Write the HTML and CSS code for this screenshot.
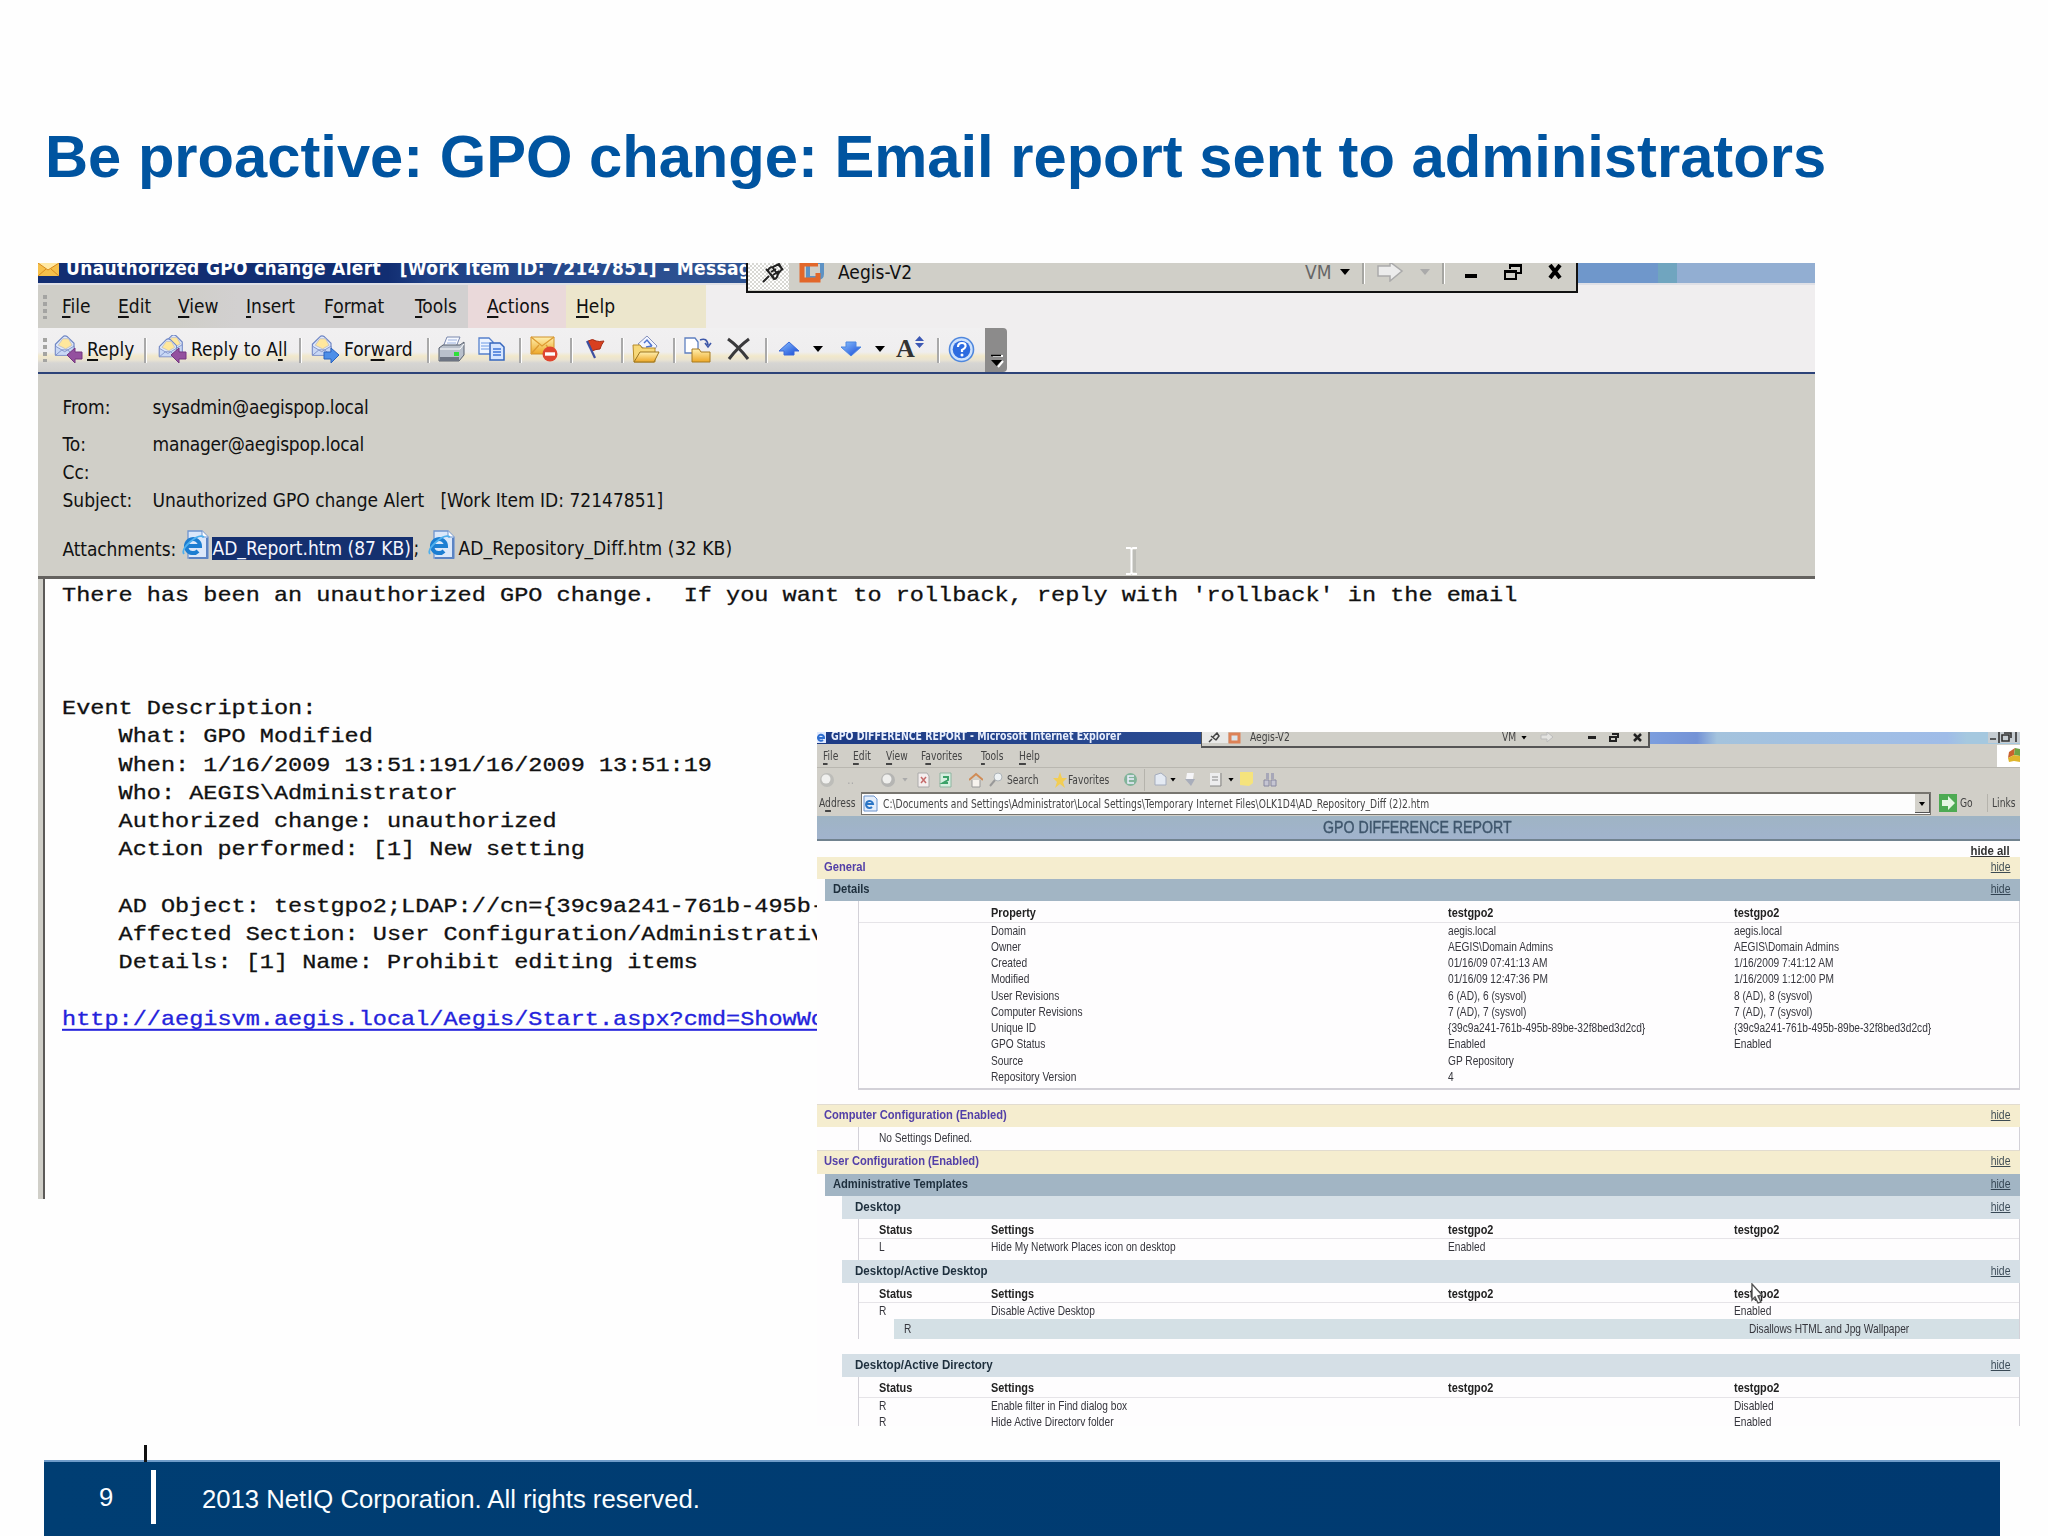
FILE: index.html
```html
<!DOCTYPE html>
<html lang="en">
<head>
<meta charset="utf-8">
<title>Be proactive: GPO change</title>
<link rel="stylesheet" href="styles.css">
</head>
<body>
<svg width="0" height="0" class="defs" aria-hidden="true">
  <defs>
    <linearGradient id="gold" x1="0" y1="0" x2="0" y2="1"><stop offset="0" stop-color="#fff0b0"/><stop offset="1" stop-color="#eda726"/></linearGradient>
    <linearGradient id="blue" x1="0" y1="0" x2="1" y2="1"><stop offset="0" stop-color="#8cc4ff"/><stop offset="1" stop-color="#1547d6"/></linearGradient>
    <symbol id="mail-open" viewBox="0 0 28 28">
      <path d="M1 10 9 2q2-2 5 0l7 7v12H1z" fill="#dfe9fb" stroke="#6f86c4" stroke-width="1.3"/>
      <path d="M4 11 9 4h6l4 7-7 4z" fill="#ffe79c" stroke="#b7b9c9" stroke-width=".8"/>
      <path d="M1 12l10 6 10-6v10H1z" fill="#c9d8f5" stroke="#7d90c8" stroke-width="1"/>
      <path d="M1 22l7-6h6l7 6" fill="none" stroke="#7d90c8"/>
    </symbol>
    <symbol id="ie-page" viewBox="0 0 28 30">
      <path d="M6 1h14l6 6v21H6z" fill="#dbe8fa" stroke="#6f95cf" stroke-width="1.3"/>
      <path d="M20 1v6h6" fill="#fff" stroke="#6f95cf"/>
      <path d="M25 8v20H7" fill="none" stroke="#5b84c4" stroke-width="2"/>
      <path d="M4 16h14a7 7 0 1 0-2 5" fill="none" stroke="#1c7ed2" stroke-width="4"/>
      <path d="M2 24Q-1 20 8 12T22 7" fill="none" stroke="#4fb0ee" stroke-width="1.8"/>
    </symbol>
  </defs>
</svg>
<main class="slide">
  <h1 class="headline">Be proactive: GPO change: Email report sent to administrators</h1>

  <section class="stage">
    <article class="mail">
      <header class="titlebar">
        <div class="caption">
          <svg class="envelope" width="21" height="14" viewBox="0 0 21 14"><path d="M0 0h21v13H0z" fill="#f6c04a"/><path d="M0 0l10 7L21 0" fill="#ffe9a5" stroke="#d78a1c"/><path d="M0 13l8-7M21 13l-8-7" stroke="#d78a1c"/></svg>
          <span>Unauthorized GPO change Alert &nbsp; [Work Item ID: 72147851] - Messag</span>
        </div>
      </header>

      <nav class="menubar">
        <i class="grip"></i>
        <span><u>F</u>ile</span><span><u>E</u>dit</span><span><u>V</u>iew</span><span><u>I</u>nsert</span><span>F<u>o</u>rmat</span><span><u>T</u>ools</span><span class="pink"><u>A</u>ctions</span><span class="cream"><u>H</u>elp</span>
      </nav>

      <div class="toolbar">
        <i class="grip"></i>
        <svg width="29" height="28" viewBox="0 0 29 28"><use href="#mail-open" width="27" height="26"/><path d="M13 20l8-7v4h7v7h-7v4z" fill="#94509f" stroke="#74357f"/></svg>
        <span><u>R</u>eply</span><i class="sep"></i>
        <svg width="29" height="28" viewBox="0 0 29 28"><use href="#mail-open" x="5" y="-1" width="26" height="25"/><use href="#mail-open" x="0" y="3" width="25" height="24"/><path d="M13 20l8-7v4h7v7h-7v4z" fill="#94509f" stroke="#74357f"/></svg>
        <span>Reply to A<u>l</u>l</span><i class="sep"></i>
        <svg width="29" height="28" viewBox="0 0 29 28"><use href="#mail-open" width="27" height="26"/><path d="M28 20l-8-7v4h-7v7h7v4z" fill="#4d8fe8" stroke="#2a62bd"/></svg>
        <span>For<u>w</u>ard</span><i class="sep"></i>
        <svg width="28" height="26" viewBox="0 0 28 26"><path d="M9 1h13l-4 10H5z" fill="#f5f8ff" stroke="#7b88ac"/><path d="M10 4h9M9 7h9" stroke="#9db2de"/><path d="M1 12l4-3h17l4-3v13l-5 6H1z" fill="#b9c0cb" stroke="#59606e"/><path d="M2 13h20l4-5" stroke="#fff" fill="none"/><path d="M2 21h19v4H2z" fill="#6d7482"/><path d="M16 16h5v4h-5z" fill="#2fe03a"/></svg>
        <svg width="28" height="24" viewBox="0 0 28 24"><path d="M1 1h10l4 4v12H1z" fill="#eef5ff" stroke="#5580cc" stroke-width="1.3"/><path d="M3 6h8M3 9h8M3 12h8" stroke="#6d9be6"/><path d="M12 6h10l4 4v13H12z" fill="#d7e6ff" stroke="#3565bd" stroke-width="1.5"/><path d="M15 12h8M15 15h8M15 18h8" stroke="#3f76d8" stroke-width="1.3"/></svg>
        <i class="sep"></i>
        <svg width="28" height="26" viewBox="0 0 28 26"><path d="M1 1h23v17H1z" fill="url(#gold)" stroke="#d09028"/><path d="M1 1l11 9L24 1M1 18l8-9M24 18l-8-9" fill="none" stroke="#dd9a32" stroke-width="1.3"/><circle cx="20" cy="18" r="7.5" fill="#df4630"/><path d="M15 18h10" stroke="#fff" stroke-width="3.4"/></svg>
        <i class="sep"></i>
        <svg width="20" height="20" viewBox="0 0 20 20"><path d="M2 2q5-3 8 0 3 1 8 0-3 4-4 8-4 0-8 2z" fill="#d8401f" stroke="#a52c16"/><path d="M1 2l8 17" stroke="#3d4fa0" stroke-width="2.2"/></svg>
        <i class="sep"></i>
        <svg width="28" height="28" viewBox="0 0 28 28"><path d="M6 9l9-8 10 10-6 8z" fill="#f2f5ff" stroke="#8590bb"/><path d="M12 8l3-3 5 6M14 12l6-1" stroke="#4e74cf" fill="none" stroke-width="1.5"/><path d="M1 10h7l2 3h13v14H2z" fill="#f7d878" stroke="#b78b28"/><path d="M2 27l6-10h19l-5 10z" fill="url(#gold)" stroke="#9b7420"/></svg>
        <i class="sep"></i>
        <svg width="28" height="27" viewBox="0 0 28 27"><path d="M1 2h10l3 4v11H1z" fill="#fff" stroke="#5f80c0" stroke-width="1.3"/><path d="M16 4q7-3 8 5m-3-2 3 4 3-4" fill="none" stroke="#3d57a8" stroke-width="1.6"/><path d="M8 13h7l2 3h9v10H8z" fill="url(#gold)" stroke="#a67a22"/></svg>
        <svg width="24" height="24" viewBox="0 0 24 24"><path d="M1 2q10 7 20 20M22 2Q11 10 2 22" fill="none" stroke="#3a3a3c" stroke-width="3"/></svg>
        <i class="sep"></i>
        <svg width="22" height="16" viewBox="0 0 22 16"><path d="M11 1l10 9h-5v4H6v-4H1z" fill="url(#blue)" stroke="#3c6ad8"/></svg>
        <i class="caret"></i>
        <svg width="22" height="16" viewBox="0 0 22 16"><path d="M11 15L1 6h5V1h10v5h5z" fill="url(#blue)" stroke="#4d86e0"/></svg>
        <i class="caret"></i>
        <span class="fontsize"><b>A</b><svg width="9" height="12" viewBox="0 0 9 12"><path d="M4.500 0L9 5H0zM4.500 12L0 7h9z" fill="#3c58b4"/></svg></span>
        <i class="sep"></i>
        <svg width="27" height="27" viewBox="0 0 27 27"><circle cx="13.500" cy="13.500" r="12" fill="#cfe2fc" stroke="#4f87dd" stroke-width="1.6"/><circle cx="13.500" cy="13.500" r="8.800" fill="#2d6be0"/><path d="M10 11q0-4 4-4t3.500 3.500Q17 12.500 14 14v2" fill="none" stroke="#fff" stroke-width="2.2"/><circle cx="14" cy="19" r="1.500" fill="#fff"/></svg>
        <i class="overflow"><svg width="14" height="14" viewBox="0 0 14 14"><path d="M3 2h10M8 13l5-6" stroke="#fff" stroke-width="2"/><path d="M1 1.500h10" stroke="#000" stroke-width="1.500"/><path d="M1 6h11l-5.500 6z" fill="#000"/></svg></i>
      </div>

      <dl class="fields">
        <dt>From:</dt><dd class="tight">sysadmin@aegispop.local</dd>
        <dt>To:</dt><dd class="tight">manager@aegispop.local</dd>
        <dt>Cc:</dt><dd></dd>
        <dt>Subject:</dt><dd>Unauthorized GPO change Alert &nbsp; [Work Item ID: 72147851]</dd>
      </dl>
      <div class="attachments">
        <span>Attachments:</span>
        <svg width="28" height="30"><use href="#ie-page"/></svg>
        <span class="selected">AD_Report.htm (87 KB)</span><span>;</span>
        <svg width="28" height="30"><use href="#ie-page"/></svg>
        <span class="second">AD_Repository_Diff.htm (32 KB)</span>
      </div>

      <div class="body"><pre>There has been an unauthorized GPO change.  If you want to rollback, reply with 'rollback' in the email



Event Description:
    What: GPO Modified
    When: 1/16/2009 13:51:191/16/2009 13:51:19
    Who: AEGIS\Administrator
    Authorized change: unauthorized
    Action performed: [1] New setting

    AD Object: testgpo2;LDAP://cn={39c9a241-761b-495b-
    Affected Section: User Configuration/Administrativ
    Details: [1] Name: Prohibit editing items

<a>http://aegisvm.aegis.local/Aegis/Start.aspx?cmd=ShowWo</a></pre></div>

      <div class="vmbar">
        <span class="pin"><svg width="22" height="20" viewBox="0 0 22 20"><path d="M1 19l6-6M4 6l8 9M6 8q1-4 5-4l6-3 3 5-4 5q-1 5-4 5zM11 5l5 7M16 1l5 6M9 9l5-3M11 12l6-4" fill="none" stroke="#222" stroke-width="2"/></svg></span>
        <svg width="25" height="21" viewBox="0 0 25 21"><path d="M9 0h14v12q0 4-5 4H9z" fill="none" stroke="#5d92c4" stroke-width="4"/><path d="M19 2H3v16h16v-7" fill="none" stroke="#e2672a" stroke-width="5"/></svg>
        <span>Aegis-V2</span>
        <span class="vm">VM</span><i class="caret"></i><i class="sep"></i>
        <svg width="27" height="20" viewBox="0 0 27 20"><path d="M1 4h12V0l12 9-12 10v-5H1z" fill="#ececec" stroke="#aaa" stroke-width="1.500"/></svg>
        <i class="caret dim"></i><i class="sep"></i>
        <svg width="12" height="5"><path d="M0 0h12v4H0z"/></svg>
        <svg width="18" height="17" viewBox="0 0 18 17"><path d="M6 5V1h11v8h-4" fill="none" stroke="#000" stroke-width="2"/><path d="M5 1.500h12" stroke="#000" stroke-width="3"/><path d="M1 7h11v8H1z" fill="none" stroke="#000" stroke-width="2"/><path d="M1 7.500h11" stroke="#000" stroke-width="3"/></svg>
        <svg width="17" height="16" viewBox="0 0 17 16"><path d="M4 1l10 13M14 1L4 14" stroke="#000" stroke-width="4"/></svg>
      </div>
      <svg class="ibeam" width="14" height="30" viewBox="0 0 14 30"><path d="M9 4v22" stroke="#bdbdb7" stroke-width="4"/><path d="M1 2h4l1.500 1L8 2h4M1 28h4l1.500-1L8 28h4M6.500 3v24" fill="none" stroke="#fff" stroke-width="2"/></svg>
    </article>

    <article class="report">
      <header class="r-title"><svg width="12" height="12" viewBox="0 0 12 12"><path d="M0 0h9v11H0z" fill="#dfe9ff"/><path d="M2 6h5a3 3 0 1 0-1 2" fill="none" stroke="#2f6fd0" stroke-width="2"/></svg><b class="sq">GPO DIFFERENCE REPORT - Microsoft Internet Explorer</b>
        <span class="r-win"><svg width="32" height="11" viewBox="0 0 32 11"><path d="M0 0h32v11H0z" fill="#c6cdd2"/><path d="M2 7h6M14 3h7v6h-7zM16 1h7v5M28 0v10M11 0v11" fill="none" stroke="#333" stroke-width="1.600"/></svg></span>
      </header>
      <nav class="r-menu"><span class="sq"><u>F</u>ile</span><span class="sq"><u>E</u>dit</span><span class="sq"><u>V</u>iew</span><span class="sq">F<u>a</u>vorites</span><span class="sq"><u>T</u>ools</span><span class="sq"><u>H</u>elp</span>
        <i class="flag"><svg width="23" height="20" viewBox="0 0 23 20"><path d="M12 7l6-4-1 7-6 3z" fill="#c9622f"/><path d="M18 3l5 1v7l-6-1z" fill="#6fa345"/><path d="M11 13l6-3 6 1v6l-6-1-5 1z" fill="#dfb62c"/></svg></i>
      </nav>
      <div class="r-tools">
        <svg width="17" height="16" viewBox="0 0 17 16"><circle cx="8" cy="8" r="7" fill="#bdbdb9"/><circle cx="7" cy="7" r="4.500" fill="#f0f0ee"/></svg>
        <span class="dots">‥</span>
        <svg width="17" height="16" viewBox="0 0 17 16"><circle cx="8" cy="8" r="7" fill="#b5b5b3"/><circle cx="7" cy="7" r="4.500" fill="#efefed"/></svg>
        <i class="caret dim"></i>
        <svg width="13" height="16" viewBox="0 0 13 16"><path d="M1 1h9l2 3v11H1z" fill="#f4eeee" stroke="#aaa"/><path d="M4 5l5 6M9 5l-5 6" stroke="#c56a6a" stroke-width="1.500"/></svg>
        <svg width="13" height="16" viewBox="0 0 13 16"><path d="M1 1h11v14H1z" fill="#d6efe0" stroke="#8fb5a0"/><path d="M4 5h5v3L4 11h5" fill="none" stroke="#3ba268" stroke-width="2"/></svg>
        <svg width="14" height="16" viewBox="0 0 14 16"><path d="M0 8l7-6 7 6" fill="none" stroke="#d08b55" stroke-width="2"/><path d="M3 8v7h8V8" fill="#f7f3ee" stroke="#999"/></svg>
        <svg width="14" height="16" viewBox="0 0 14 16"><circle cx="9" cy="5" r="4" fill="#eef2f4" stroke="#aeb4b8"/><path d="M6 8l-5 6" stroke="#999" stroke-width="2"/></svg>
        <span class="sq">Search</span>
        <svg width="14" height="16" viewBox="0 0 14 16"><path d="M7 0l2 6h5l-4 4 2 6-5-4-5 4 2-6-4-4h5z" fill="#f2cd54"/></svg>
        <span class="sq">Favorites</span>
        <svg width="15" height="15" viewBox="0 0 15 15"><circle cx="7.500" cy="7.500" r="6.500" fill="#82b49a"/><path d="M11 4H5v3h6M5 7v4h6" fill="none" stroke="#eef" stroke-width="1.500"/></svg>
        <i class="sep"></i>
        <svg width="13" height="15" viewBox="0 0 13 15"><path d="M1 3l6-2 5 4v8H1z" fill="#e4eaf3" stroke="#a5adbd"/></svg>
        <i class="caret"></i>
        <svg width="12" height="15" viewBox="0 0 12 15"><path d="M3 1h7l-1 6H2z" fill="#f5f5f8"/><path d="M1 7h10l-4 7z" fill="#a9aebb"/></svg>
        <svg width="13" height="15" viewBox="0 0 13 15"><path d="M1 1h10v13H1z" fill="#ededee"/><path d="M3 5h6M3 8h6M12 1v13H1" fill="none" stroke="#888"/></svg>
        <i class="caret"></i>
        <svg width="17" height="17" viewBox="0 0 17 17"><path d="M2 1h13v11l-4 3-9-1z" fill="#f5e37c"/></svg>
        <svg width="14" height="16" viewBox="0 0 14 16"><path d="M3 1h3v6H3zM8 1h3v6H8z" fill="#a7a7b8"/><path d="M1 8h5v6H1zM8 8h5v6H8z" fill="#c5c5d2" stroke="#8888a0"/></svg>
      </div>
      <div class="r-addr">
        <span class="sq">A<u>d</u>dress</span>
        <div class="field"><svg width="15" height="17" viewBox="0 0 15 17"><path d="M1 1h10l3 3v12H1z" fill="#e4eefb" stroke="#6b93cc"/><path d="M4 9h6a3.500 3.500 0 1 0-1 3" fill="none" stroke="#2b76c6" stroke-width="2"/></svg><span class="sq url">C:\Documents and Settings\Administrator\Local Settings\Temporary Internet Files\OLK1D4\AD_Repository_Diff (2)2.htm</span><i class="drop"><i class="caret"></i></i></div>
        <svg class="go" width="18" height="18" viewBox="0 0 18 18"><path d="M0 0h18v18H0z" fill="#4daa53"/><path d="M3 6h6V2l7 7-7 7v-4H3z" fill="#e5f6e3"/></svg>
        <span class="sq">Go</span><i class="sep"></i><span class="sq">Links</span>
      </div>
      <h2 class="r-band"><span class="sq">GPO DIFFERENCE REPORT</span></h2>
      <div class="r-all"><b class="sq">hide all</b></div>

      <div class="sec gold"><b class="sq">General</b><a class="sq">hide</a></div>
      <div class="sec steel"><b class="sq">Details</b><a class="sq">hide</a></div>
      <div class="panel props">
        <div class="row head"><i></i><b class="sq">Property</b><b class="sq">testgpo2</b><b class="sq">testgpo2</b></div>
        <div class="row"><i></i><span class="sq">Domain</span><span class="sq">aegis.local</span><span class="sq">aegis.local</span></div>
        <div class="row"><i></i><span class="sq">Owner</span><span class="sq">AEGIS\Domain Admins</span><span class="sq">AEGIS\Domain Admins</span></div>
        <div class="row"><i></i><span class="sq">Created</span><span class="sq">01/16/09 07:41:13 AM</span><span class="sq">1/16/2009 7:41:12 AM</span></div>
        <div class="row"><i></i><span class="sq">Modified</span><span class="sq">01/16/09 12:47:36 PM</span><span class="sq">1/16/2009 1:12:00 PM</span></div>
        <div class="row"><i></i><span class="sq">User Revisions</span><span class="sq">6 (AD), 6 (sysvol)</span><span class="sq">8 (AD), 8 (sysvol)</span></div>
        <div class="row"><i></i><span class="sq">Computer Revisions</span><span class="sq">7 (AD), 7 (sysvol)</span><span class="sq">7 (AD), 7 (sysvol)</span></div>
        <div class="row"><i></i><span class="sq">Unique ID</span><span class="sq">{39c9a241-761b-495b-89be-32f8bed3d2cd}</span><span class="sq">{39c9a241-761b-495b-89be-32f8bed3d2cd}</span></div>
        <div class="row"><i></i><span class="sq">GPO Status</span><span class="sq">Enabled</span><span class="sq">Enabled</span></div>
        <div class="row"><i></i><span class="sq">Source</span><span class="sq">GP Repository</span></div>
        <div class="row"><i></i><span class="sq">Repository Version</span><span class="sq">4</span></div>
      </div>

      <div class="sec gold"><b class="sq">Computer Configuration (Enabled)</b><a class="sq">hide</a></div>
      <div class="panel none"><span class="sq">No Settings Defined.</span></div>
      <div class="sec gold"><b class="sq">User Configuration (Enabled)</b><a class="sq">hide</a></div>
      <div class="sec steel"><b class="sq">Administrative Templates</b><a class="sq">hide</a></div>

      <div class="sec pale"><b class="sq">Desktop</b><a class="sq">hide</a></div>
      <div class="panel">
        <div class="row head"><b class="sq">Status</b><b class="sq">Settings</b><b class="sq">testgpo2</b><b class="sq">testgpo2</b></div>
        <div class="row last"><span class="sq">L</span><span class="sq">Hide My Network Places icon on desktop</span><span class="sq">Enabled</span></div>
      </div>
      <div class="sec pale"><b class="sq">Desktop/Active Desktop</b><a class="sq">hide</a></div>
      <div class="panel">
        <div class="row head"><b class="sq">Status</b><b class="sq">Settings</b><b class="sq">testgpo2</b><b class="sq">testgpo2</b></div>
        <div class="row"><span class="sq">R</span><span class="sq">Disable Active Desktop</span><i></i><span class="sq">Enabled</span></div>
        <div class="subrow"><span class="sq">R</span><span class="sq">Disallows HTML and Jpg Wallpaper</span></div>
      </div>
      <div class="sec pale"><b class="sq">Desktop/Active Directory</b><a class="sq">hide</a></div>
      <div class="panel">
        <div class="row head"><b class="sq">Status</b><b class="sq">Settings</b><b class="sq">testgpo2</b><b class="sq">testgpo2</b></div>
        <div class="row"><span class="sq">R</span><span class="sq">Enable filter in Find dialog box</span><i></i><span class="sq">Disabled</span></div>
        <div class="row"><span class="sq">R</span><span class="sq">Hide Active Directory folder</span><i></i><span class="sq">Enabled</span></div>
      </div>

      <div class="r-vm">
        <i class="pin"><svg width="12" height="11" viewBox="0 0 12 11"><path d="M1 10l3-3M3 4l5 4M5 5l4-4 2 3-3 4" fill="none" stroke="#444" stroke-width="1.500"/></svg></i>
        <svg width="13" height="12" viewBox="0 0 13 12"><path d="M2 2h9v8H2z" fill="#dbe4ea" stroke="#dd8257" stroke-width="3"/></svg>
        <span class="sq">Aegis-V2</span><span class="sq">VM</span><i class="caret"></i>
        <svg width="14" height="11" viewBox="0 0 14 11"><path d="M1 3h6V0l6 5-6 5V7H1z" fill="#e3e3e0" stroke="#bbb"/></svg>
        <svg width="8" height="3"><path d="M0 0h8v3H0z" fill="#222"/></svg>
        <svg width="10" height="9" viewBox="0 0 10 9"><path d="M3 1h6v4M1 4h6v4H1z" fill="none" stroke="#222" stroke-width="2"/></svg>
        <svg width="9" height="9" viewBox="0 0 9 9"><path d="M1 1l7 7M8 1L1 8" stroke="#222" stroke-width="2.500"/></svg>
      </div>
      <svg class="pointer" width="14" height="22" viewBox="0 0 14 22"><path d="M1 1l10 11-4 1 3 6-3 1-3-6-3 3z" fill="#fff" stroke="#555" stroke-width="1.400"/></svg>
    </article>
  </section>

  <footer class="foot">
    <span class="page">9</span><i class="rule"></i><span class="copy">2013 NetIQ Corporation. All rights reserved.</span>
    <i class="tick"></i>
  </footer>
</main>
</body>
</html>
```
FILE: styles.css
```css
* { box-sizing: border-box; }
body { margin: 0; background: #fefefe; font-family: "Liberation Sans", sans-serif; }
.defs { position: absolute; }
svg { display: block; flex: none; }
i { display: block; font-style: normal; }
u { text-underline-offset: 3px; text-decoration-thickness: 1.5px; text-decoration-skip-ink: none; }

.slide { width: 2048px; height: 1536px; overflow: hidden; display: flex; flex-direction: column; }
.headline {
  margin: 0; height: 263px; padding: 125px 0 0 45px;
  font-size: 59.7px; line-height: 64px; color: #0054a0; white-space: nowrap;
}
.stage { position: relative; height: 1197px; }

/* mail window */
.mail {
  position: relative; margin-left: 38px; width: 1777px; height: 936px;
  display: flex; flex-direction: column;
  font: 19px "DejaVu Sans Condensed", "DejaVu Sans", sans-serif; color: #111; white-space: nowrap;
}
.titlebar {
  height: 22px; border-bottom: 2px solid #dfe0e6;
  background: linear-gradient(90deg, #122e72 0, #122e72 350px, #1f4186 390px, #2f5493 700px, #2f5493 1540px, #6f97cb 1540px, #6f97cb 1620px, #70a5bf 1620px, #70a5bf 1639px, #92aed2 1639px);
}
.caption { display: flex; gap: 7px; height: 20px; width: 709px; overflow: hidden; color: #fff; font-weight: bold; letter-spacing: .31px; }
.caption span { line-height: 24px; margin-top: -7px; }
.menubar {
  height: 43px; display: grid; align-items: center;
  grid-template-columns: 24px 56px 60px 68px 78px 91px 53px 98px 140px;
  background: linear-gradient(90deg, #cfcec8 0, #cfcec8 140px, #d2d0d0 200px, #d2d0d0 430px, #f0eeef 668px);
}
.menubar span { line-height: 43px; }
.pink { background: #ead9da; padding-left: 19px; }
.cream { background: #ece6cc; padding-left: 10px; }
.grip { width: 4px; height: 24px; margin-left: 5px; background: repeating-linear-gradient(#a4a4a2 0 4px, transparent 4px 7px); }
.toolbar {
  height: 46px; display: grid; align-items: center; border-bottom: 2px solid #2c4378;
  grid-template-columns: 16px 33px 57px 14px 33px 108px 12px 33px 83px 11px 40px 41px 11px 40px 16px 35px 11px 41px 11px 43px 38px 13px 35px 27px 35px 21px 41px 11px 37px 22px;
  background: linear-gradient(#f1f0f1 0, #efeeef 24px, #f1e8cb 28px, #e9e3d2 32px, #d6d5d3 35px, #d0cfcc 43px) 0 0 / 960px 100% no-repeat #f0eeef;
}
.toolbar > * { justify-self: start; }
.toolbar > svg, .toolbar > .caret { margin-top: -2px; }
.toolbar .sep { width: 3px; height: 25px; background: #a9a9a9; border-right: 1px solid #fff; }
.toolbar span { margin-top: -3px; }
.caret { width: 10px; height: 6px; background: #000; clip-path: polygon(0 0, 100% 0, 50% 100%); }
.caret.dim { background: #aaa; }
.fontsize { display: flex; align-items: flex-start; color: #333; }
.fontsize b { font: bold 26px/26px "Liberation Serif", serif; }
.overflow { width: 22px; height: 44px; padding: 26px 0 0 5px; background: #8c8b8b; border-radius: 0 4px 4px 0; }
.fields {
  margin: 0; height: 141px; padding: 19px 0 0 24.500px; background: #d0cfc8;
  display: grid; grid-template-columns: 90px 1fr; grid-template-rows: 37px 28px 28px 28px; line-height: 28px;
}
.fields dt, .fields dd { margin: 0; }
.fields .tight { letter-spacing: -.24px; }
.attachments {
  height: 64px; padding: 16px 0 0 24.500px; background: #d0cfc8; border-bottom: 3px solid #64625f;
  display: flex; align-items: flex-start; line-height: 34px;
}
.attachments > span:first-child { width: 118px; letter-spacing: -.1px; margin-top: 1px; }
.attachments svg { width: 30px; margin: -1px 1px 0 0; }
.attachments .selected { height: 23px; line-height: 22px; margin-top: 6px; width: 201px; padding-left: 1px; background: #14306f; color: #f4f6ff; }
.selected + span { width: 14px; padding-left: 1px; }
.second { letter-spacing: .13px; padding-left: 1px; }
.body { flex: 1; border-left: 5px solid #d0cfc8; margin-right: -40px; background: linear-gradient(90deg, #5c5a58 2px, #fefefe 2px); }
.body pre {
  margin: 0; padding: 0; width: max-content;
  font: 21px/28.270px "Liberation Mono", monospace; -webkit-text-stroke: .3px;
  transform: translate(19px, 2.800px) scaleX(1.1212); transform-origin: 0 0;
}
.body a { color: #2422dc; text-decoration: underline; text-underline-offset: 4px; text-decoration-thickness: 1.500px; text-decoration-skip-ink: none; }
.vmbar {
  position: absolute; left: 708px; top: 0; width: 832px; height: 30px; overflow: hidden;
  border: 2px solid #111; border-top: 0; background: #d0cfc8;
  display: grid; align-items: center; grid-template-rows: 18px;
  grid-template-columns: 51px 39px 467px 35px 22px 15px 43px 22px 23px 39px 42px 20px;
}
.vmbar .pin { height: 27px; width: 41px; align-self: start; padding: 0 0 0 14px; background: repeating-conic-gradient(#fff 0 25%, #d8d8d4 0 50%) 0 0 / 4px 4px; }
.vmbar .sep { width: 3px; height: 24px; background: #a5a5a1; border-right: 1px solid #fff; }
.vm { color: #666; }
.vmbar svg:nth-of-type(3) { margin-top: 9px; }
.ibeam { position: absolute; left: 1087px; top: 283px; }

/* browser report, laid over the mail */
.report {
  position: absolute; left: 817px; top: 469px; width: 1203px; height: 694px; overflow: hidden;
  background: #fefdfe; color: #36363d; font-size: 12.400px; line-height: 16px; white-space: nowrap; filter: blur(.5px);
}
.sq { display: inline-block; transform: scaleX(.82); transform-origin: 0 50%; }
.r-title {
  height: 12px; display: flex; gap: 2px; overflow: hidden; color: #e8eefc;
  font: bold 12px/14px "DejaVu Sans Condensed", sans-serif;
  background: linear-gradient(90deg, #1d3b85 0, #2b4c92 384px, #7c9ede 833px, #7493d6 880px, #a4c3dd 900px, #9fbce8 1130px, #a5c8df 1150px);
}
.r-title .sq { transform: translateY(-3px) scaleX(.868); }
.r-win { position: absolute; right: 0; top: 0; }
.r-menu, .r-tools, .r-addr { font: 12px/16px "DejaVu Sans Condensed", sans-serif; color: #444; background: #d1cfc8; }
.r-menu .sq, .r-tools .sq, .r-addr .sq { transform: scaleX(.85); }
.r-menu {
  height: 24px; display: grid; align-items: center; padding: 1px 0 0 6px; border-bottom: 1px solid #b9b7b0;
  grid-template-columns: 30px 33px 35px 60px 38px 1fr 23px;
}
.flag { background: #fff; align-self: stretch; }
.r-tools {
  height: 23px; display: grid; align-items: center; padding-left: 2px; justify-items: start;
  grid-template-columns: 28px 33px 22px 15px 22px 30px 20px 18px 46px 15px 55px 21px 10px 16px 14px 25px 19px 10px 25px 20px;
}
.r-tools .caret, .r-vm .caret, .drop .caret { width: 6px; height: 4px; }
.dots { color: #aaa; }
.r-tools .sep { width: 1px; height: 22px; background: #b5b3ac; }
.r-addr { height: 25px; display: grid; align-items: center; padding-left: 2px; grid-template-columns: 42px 1070px 8px 21px 27px 5px 1fr; padding-bottom: 1px; }
.r-addr .go { grid-column: 4; }
.r-addr .sep { width: 1px; height: 18px; background: #b5b3ac; }
.field { height: 23px; display: flex; align-items: center; background: #fdfdfd; border: solid #77756f; border-width: 2px 1px 1px; gap: 5px; padding-left: 1px; position: relative; }
.url { width: 500px; }
.drop { margin-left: auto; width: 15px; height: 19px; padding: 8px 0 0 4px; background: #d4d2cb; border-right: 1px solid #555; border-bottom: 1px solid #555; }
.r-band {
  margin: 0; height: 25px; border-bottom: 2px solid #71828f; background: linear-gradient(#9fb4c4, #a1b3cd);
  font-size: 16px; font-weight: normal; line-height: 23px; color: #3f566c; padding-left: 505.500px;
}
.r-band .sq { transform: scaleX(.885); -webkit-text-stroke: .4px; }
.r-all { height: 16px; text-align: right; padding: 1.500px 10px 0 0; }
.r-all b, .sec a { transform-origin: 100% 50%; text-decoration: underline; text-underline-offset: 1px; }
.r-all b { color: #333; transform: scaleX(.92); }
.sec { display: flex; justify-content: space-between; padding: 0 10px 0 7px; color: #1e2f3d; }
.sec .sq { transform: scaleX(.9); }
.sec a.sq { transform: scaleX(.84); color: inherit; opacity: .85; }
.sec.gold { height: 22px; line-height: 21px; background: #f5edcf; }
.sec.gold b { color: #5340a8; }
.sec.steel { height: 22px; line-height: 21px; margin-left: 8px; background: #a2b5c4; padding-left: 8px; }
.sec.pale { height: 23px; line-height: 22px; margin-left: 25px; background: #d5dfe6; padding-left: 13px; }
.sec.pale b { transform: scaleX(.935); }
.panel { margin-left: 41px; border: solid #d3d1d8; border-width: 0 1px; }
.props { height: 189px; border-bottom-width: 2px; margin-bottom: 13.500px; }
.props ~ .gold { height: 23.500px; border-top: 1px solid #e2dcd0; }
.row { display: grid; grid-template-columns: 112px 456.500px 286px 1fr; padding-left: 20px; height: 16.250px; line-height: 16px; }
.row > * { justify-self: start; }
.row.head { height: 20.500px; padding-top: 3px; border-bottom: 1px solid #e6e4e8; color: #222; }
.row.head .sq { transform: scaleX(.88); }
.props .row.head { height: 21.500px; padding-top: 3.500px; }
.row.last { height: 20.500px; }
.none { height: 23px; line-height: 22px; padding-left: 20px; }
.subrow { display: grid; grid-template-columns: 845px 1fr; justify-items: start; margin: 0 0 15px 35px; height: 20px; line-height: 20px; padding-left: 10px; background: #d4e0e5; }
.r-vm {
  position: absolute; left: 384px; top: 0; width: 449px; height: 16px; overflow: hidden; background: #d0cfc8;
  border: solid #555; border-width: 0 2px 2px 1px; font: 12px/11px "DejaVu Sans Condensed", sans-serif; color: #444;
  display: grid; align-items: center; grid-template-rows: 11px;
  grid-template-columns: 26px 22px 252px 19px 19px 48px 21px 24px 12px;
}
.r-vm .pin { background: #e9e9e7; padding-left: 6px; }
.r-vm .sq { transform: scaleX(.85); }
.pointer { position: absolute; left: 934px; top: 551px; }

/* slide footer */
.foot {
  position: relative; margin-left: 44px; width: 1956px; height: 76px; border-top: 2px solid #6f9cc9;
  background: linear-gradient(90deg, #003e73, #003970); color: #fbfdff; font-size: 25.700px; line-height: 30px;
  display: grid; grid-template-columns: 107px 51px 1fr; align-items: start;
}
.page { padding: 20px 0 0 55px; }
.rule { width: 5px; height: 54px; margin-top: 8px; background: #fff; }
.copy { padding-top: 22px; letter-spacing: -.01px; }
.tick { position: absolute; left: 100px; top: -17px; width: 3px; height: 17px; background: #111; }
```
